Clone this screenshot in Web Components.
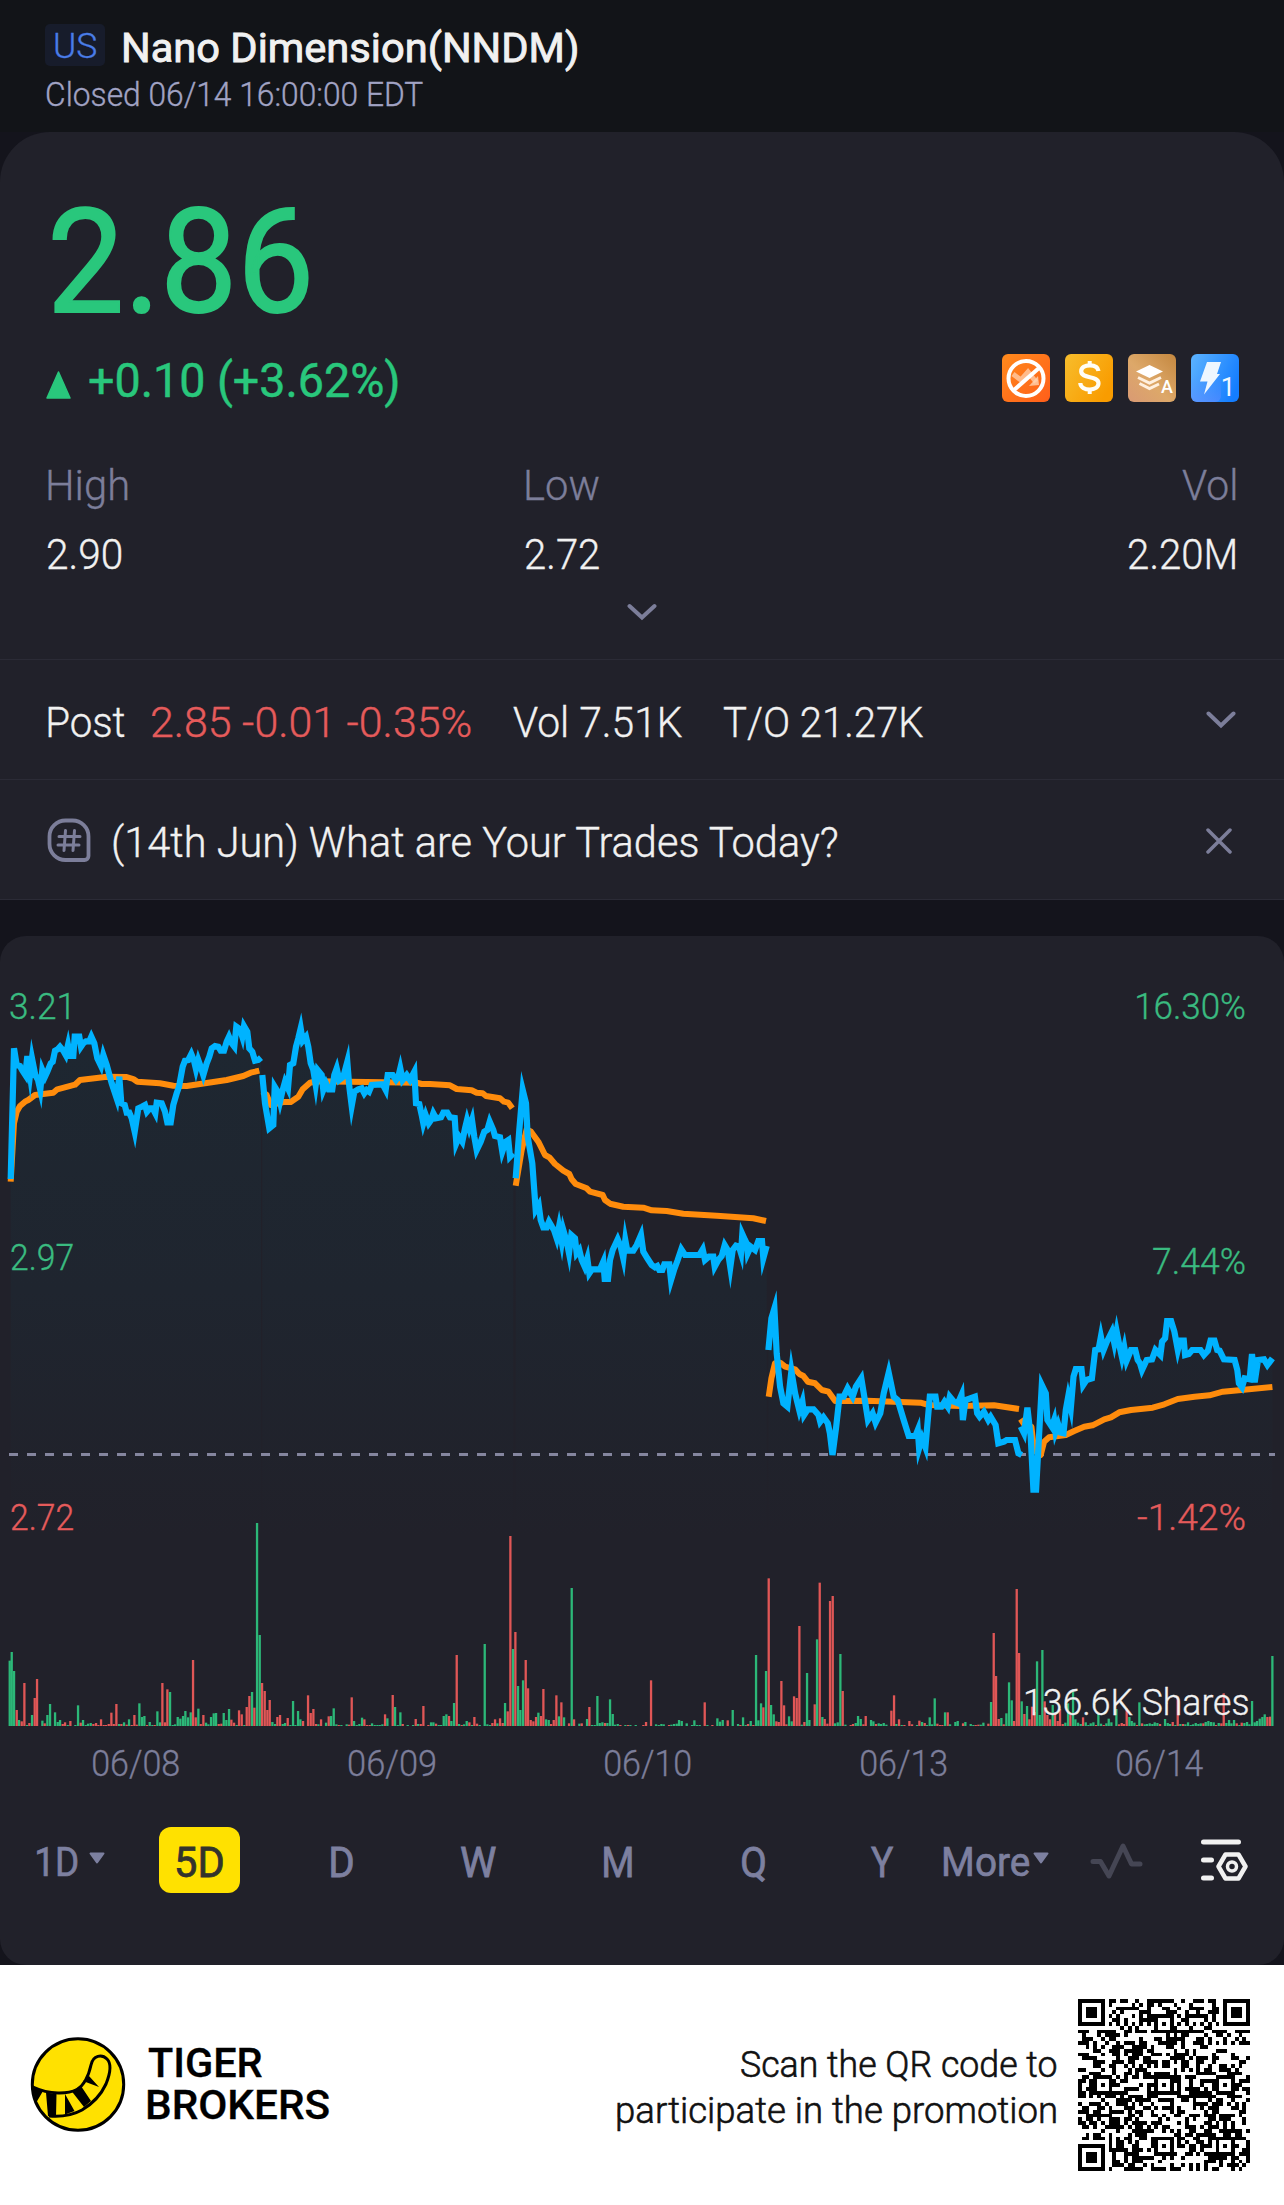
<!DOCTYPE html>
<html lang="en">
<head>
<meta charset="utf-8">
<title>Nano Dimension (NNDM)</title>
<style>
html,body{margin:0;padding:0}
body{width:1284px;background:#14141c;font-family:Roboto,"Liberation Sans",sans-serif}
</style>
</head>
<body>
<stock-page></stock-page>
<script>
const define=(name,html,setup)=>customElements.define(name,class extends HTMLElement{
  connectedCallback(){
    if(this.shadowRoot)return;
    const t=document.createElement('template');t.innerHTML=html;
    this.attachShadow({mode:'open'}).append(t.content.cloneNode(true));
    if(setup)setup.call(this,this.shadowRoot);
  }
});

/* A line of text whose box is its ink: cap height by requested width. */
const pen=document.createElement('canvas').getContext('2d');
define('fit-text',`<style>
:host{display:block;flex:none;white-space:nowrap}
span{display:block;width:max-content;transform-origin:0 50%}
</style><span><slot></slot></span>`,function(root){
  const cap=+this.getAttribute('cap'),w=+this.getAttribute('w'),wt=this.getAttribute('weight')||300;
  const size=cap/0.711,s=root.querySelector('span'),edge=this.getAttribute('edge')||(wt==300?.35:0);
  pen.font=`${wt} ${size}px Roboto, "Liberation Sans", sans-serif`;
  const m=pen.measureText(this.textContent);
  const k=w/(m.actualBoundingBoxRight+m.actualBoundingBoxLeft);
  this.style.cssText+=`;width:${w}px;height:${cap}px`;
  s.style.cssText=`font-size:${size}px;font-weight:${wt};line-height:${cap}px;-webkit-text-stroke:${edge}px currentColor;transform:translate(${m.actualBoundingBoxLeft*k}px,.0137em) scaleX(${k})`;
});

define('page-header',`<style>
:host{display:block;height:132px;background:#121418;box-sizing:border-box;padding:24px 45px 0}
.row{display:flex;align-items:center;gap:19px;height:42px}
.badge{width:60px;height:42px;border-radius:5px;background:#171c2b;color:#4a7de8;display:flex;align-items:center;justify-content:center}
.badge fit-text{margin-top:3px}
.name{color:#f1f1f1;margin-top:5px}
.time{color:#a1a3c4;margin:18px 0 0 2px}
</style>
<div class="row"><div class="badge"><fit-text w="41" cap="25.5">US</fit-text></div>
<fit-text class="name" w="453" cap="29.5" weight="400" edge=".9">Nano Dimension(NNDM)</fit-text></div>
<fit-text class="time" w="376" cap="23">Closed 06/14 16:00:00 EDT</fit-text>`);

define('quote-badges',`<style>:host{display:flex;gap:15px}svg{display:block}</style>
<svg width="48" height="48"><defs><linearGradient id="a" x1="0" y1="0" x2="1" y2="1"><stop offset="0" stop-color="#ff8a1c"/><stop offset="1" stop-color="#ff5e1a"/></linearGradient></defs>
<rect width="48" height="48" rx="6" fill="url(#a)"/><path d="M11 20l8 6 7-8 8 10" fill="none" stroke="#ffd2b0" stroke-width="5" opacity=".75"/><path d="M27 32l10-1-1-9z" fill="#ffd2b0" opacity=".8"/>
<circle cx="24" cy="24.500" r="17.500" fill="none" stroke="#fff" stroke-width="4"/><path d="M12 36L37 14" stroke="#fff" stroke-width="4"/></svg>
<svg width="48" height="48"><defs><linearGradient id="b" x1="0" y1="0" x2="1" y2=".6"><stop offset="0" stop-color="#f7bd2c"/><stop offset="1" stop-color="#f99c00"/></linearGradient></defs>
<rect width="48" height="48" rx="6" fill="url(#b)"/><path d="M33.500 17.500C33 13.500 29.500 11.800 25 11.800c-5 0-8.800 2.200-8.800 6 0 8 17.300 4 17.300 12 0 3.800-3.800 6.200-8.600 6.200-5.200 0-9.400-2.200-9.600-6.500" transform="translate(0 -.5)" fill="none" stroke="#fffdf5" stroke-width="4.200"/><path d="M24.700 7v4M24.700 35.500v4.500" stroke="#fffdf5" stroke-width="4"/></svg>
<svg width="48" height="48"><defs><linearGradient id="c" x1="0" y1="1" x2="1" y2="0"><stop offset="0" stop-color="#d99a74"/><stop offset=".45" stop-color="#dda869"/><stop offset="1" stop-color="#c4873f"/></linearGradient></defs>
<rect width="48" height="48" rx="6" fill="url(#c)"/><path d="M8 17.500l13.500-6.500L35 17.500 21.500 24z" fill="#fff"/><path d="M10 23.500l11.500 5.500 11.500-5.500M11.500 29.500l10 5 9.500-4.500" fill="none" stroke="#fff0df" stroke-width="3"/>
<text x="39" y="39" text-anchor="middle" font-family="Roboto" font-weight="500" font-size="18" fill="#fff">A</text></svg>
<svg width="48" height="48"><defs><linearGradient id="d" x1="0" y1=".2" x2="1" y2=".6"><stop offset="0" stop-color="#58b0ff"/><stop offset="1" stop-color="#147dff"/></linearGradient><linearGradient id="e" x1="0" y1="0" x2="0" y2="1"><stop offset=".4" stop-color="#5a8cff" stop-opacity="0"/><stop offset="1" stop-color="#6f8cff" stop-opacity=".5"/></linearGradient></defs>
<rect width="48" height="48" rx="6" fill="url(#d)"/><rect width="30" height="48" rx="6" fill="url(#e)"/><path d="M16 8h14l-4 12h3L13 40.500l3.500-13H9z" fill="#eef7ff"/>
<text x="37" y="42" text-anchor="middle" font-family="Roboto" font-weight="400" font-size="26" fill="#eef7ff">1</text></svg>`);

define('quote-card',`<style>
:host{display:block;background:#21212a;border-radius:50px 50px 0 0;overflow:hidden;height:768px;box-sizing:border-box}
.main{height:527px;padding:77px 45px 0;box-sizing:border-box}
.price{color:#29c77c;margin-left:8px}
.change{display:flex;height:48px;margin-top:42px;color:#29c77c;justify-content:space-between}
.delta{display:flex;gap:18px;padding:9px 0 0 1px}
.delta svg{margin-top:8px}
.stats{display:grid;grid-template-columns:478px 1fr auto;padding:0 4px 0 3px;margin-top:68px}
.stat{display:flex;flex-direction:column;gap:39px;color:#f1f1f1}
.stat>:first-child{color:#7c7e9a}
.stat.end{align-items:flex-end}
.more{display:block;margin:34px auto 0}
.line{height:120px;border-top:1px solid #2b2b36;box-sizing:border-box;padding:47px 45px 0 48px;display:flex;color:#f1f1f1}
.last{border-bottom:1px solid #2b2b36;height:121px;padding-left:47px}
svg{flex:none}
</style>
<section class="main">
<fit-text class="price" w="255" cap="103" weight="400" edge="2">2.86</fit-text>
<div class="change"><div class="delta"><svg width="25" height="28"><path d="M12.500 1L24 27H1z" fill="#29c77c" stroke="#29c77c" stroke-width="1.500" stroke-linejoin="round"/></svg>
<fit-text w="309" cap="34" weight="400" edge=".5">+0.10 (+3.62%)</fit-text></div><quote-badges></quote-badges></div>
<div class="stats">
<div class="stat"><fit-text w="80" cap="30">High</fit-text><fit-text w="73" cap="30">2.90</fit-text></div>
<div class="stat"><fit-text w="73" cap="30">Low</fit-text><fit-text w="73" cap="30">2.72</fit-text></div>
<div class="stat end"><fit-text w="53" cap="30">Vol</fit-text><fit-text w="106" cap="30">2.20M</fit-text></div>
</div>
<svg class="more" width="30" height="18"><path d="M2.500 3L15 14.500 27.500 3" fill="none" stroke="#7c7e9a" stroke-width="4" stroke-linecap="round"/></svg>
</section>
<section class="line"><fit-text w="77" cap="30">Post</fit-text><fit-text style="color:#e55b5b;margin-left:27px" w="319" cap="30">2.85 -0.01 -0.35%</fit-text>
<fit-text style="margin-left:42px" w="169" cap="30">Vol 7.51K</fit-text><fit-text style="margin-left:42px" w="199" cap="30">T/O 21.27K</fit-text>
<svg style="margin:4px 3px 0 auto" width="30" height="18"><path d="M2.500 2.500L15 14.500 27.500 2.500" fill="none" stroke="#7c7e9a" stroke-width="4" stroke-linecap="round"/></svg></section>
<section class="line last">
<svg style="margin-top:-9px" width="44" height="45"><path d="M18.500 2.500h7a16 16 0 0 1 16 16V38a4 4 0 0 1-4 4H18.500a16 16 0 0 1-16-16v-7.500a16 16 0 0 1 16-16z" fill="none" stroke="#7c7e9a" stroke-width="3.800"/><path d="M18.500 12.500l-1.500 20M27.500 12.500l-1.500 20M12 18.500h21M11 27h21" stroke="#7c7e9a" stroke-width="3" stroke-linecap="round"/></svg>
<fit-text style="margin-left:22px" w="726" cap="30">(14th Jun) What are Your Trades Today?</fit-text>
<svg style="margin:1px 7px 0 auto" width="26" height="26"><path d="M2 2l22 22M24 2L2 24" stroke="#7c7e9a" stroke-width="3.500" stroke-linecap="round"/></svg></section>`);

/* Price, average and volume series: [originX, originY, scaleX, scaleY, points]. */
const A=[0,980,3,3],B=[430,1040,3,3],C=[760,1220,2.992,3];
const price=[
 [[A,'32,597 42,205 50,255 60,258 66,270 76,285 82,228 90,285 96,235 106,285 114,300 121,330 127,270 135,290 142,275 152,250 158,245 165,212 173,208 180,200 190,212 197,225 204,195 210,228 220,228 224,170 238,170 243,200 250,190 258,184 268,184 274,170 283,190 292,235 303,258 310,225 320,255 335,310 350,355 358,290 364,370 374,375 380,398 388,398 395,415 404,455 415,385 425,380 435,375 441,395 450,385 458,385 466,400 470,368 485,370 495,395 502,427 512,427 520,375 530,340 537,320 548,260 555,242 565,240 574,222 582,242 588,268 595,240 602,260 610,285 620,250 628,230 635,205 645,198 655,200 662,212 672,212 680,185 687,170 695,190 703,200 709,140 720,148 727,170 732,138 742,155 748,205 757,215 765,242 775,240 783,233']],
 [[A,'787,285 795,370 808,445 820,435 824,320 833,335 840,365 848,330 855,305 864,325 870,255 880,250 888,200 895,175 902,145 908,182 918,170 925,200 932,250 940,270 947,315 953,270 965,285 970,330 978,310 986,328 997,328 1003,285 1010,265 1018,300 1030,290 1042,245 1048,320 1055,378 1063,335 1075,328 1085,325 1093,340 1100,330 1107,335 1115,315 1148,313 1157,330 1163,285 1178,285 1188,300 1195,290 1201,265 1208,300 1220,285 1230,300 1243,275 1248,370 1258,372 1265,405 1270,430 1277,405 1286,430'],[B,'3,240 10,220 18,235 33,232 40,218 52,218 60,232 74,234 79,310 87,290 97,305 105,265 111,240 118,265 126,240 133,290 140,330 152,305 163,275 172,270 179,245 190,270 195,288 210,292 217,335 227,305 235,300 240,350 250,340']],
 [[B,'257,415 268,270 278,150 288,190 293,290 300,330 307,370 317,510 326,495 332,540 340,562 350,562 357,545 367,562 372,570 380,595 387,560 395,605 400,570 410,605 417,640 424,585 435,595 440,640 448,630 455,660 464,680 472,655 478,700 486,688 510,688 520,665 524,717 534,717 540,660 548,630 563,598 572,620 580,655 586,600 592,632 610,632 620,615 633,585 640,635 652,655 665,675 675,682 682,678 688,690 697,690 703,673 718,673 723,720 732,690 743,660 754,628 765,645 808,645 818,628 825,660 837,650 850,650 854,680 865,660 875,648 884,615 893,630 901,682 908,630 918,617 927,620 933,640 937,582 945,600 950,610 953,640 962,620 975,630 985,603 996,603 1000,655 1010,618']],
 [[C,'25,390 34,295 43,265 50,400 60,500 70,550 82,560 94,453 105,520 118,572 127,545 132,585 143,568 160,568 175,585 180,605 190,592 203,610 209,640 217,705 228,620 238,530 250,530 262,505 277,530 287,500 303,475 312,530 323,600 337,580 346,608 360,580 370,520 385,458 400,530 412,540 430,600 445,648 465,648 472,630 476,685 485,655 495,682 508,530 525,530 530,560 543,560 552,545 562,560 568,530 580,545 592,550 603,525 607,600 615,540 643,530 650,580 657,590 670,575 683,600 690,590 705,615 713,670 730,665 738,660 763,660 773,700 783,705']],
 [[C,'780,620 790,640 800,563 810,650 818,809 826,809 843,495 855,520 860,600 873,620 880,600 884,635 892,612 900,638 908,640 915,570 922,530 930,565 938,470 945,447 962,447 967,495 977,480 993,475 1003,390 1013,388 1020,350 1028,390 1038,365 1053,335 1060,370 1067,333 1075,375 1083,412 1090,382 1097,422 1110,390 1123,390 1130,420 1137,430 1143,450 1157,420 1173,418 1183,390 1198,405 1203,365 1212,355 1218,303 1230,303 1240,335 1250,390 1257,362 1268,362 1272,405 1283,402 1293,390 1318,390 1328,405 1340,392 1348,362 1360,362 1368,390 1375,392 1388,418 1420,420 1428,450 1433,490 1442,502 1450,475 1465,478 1472,402 1480,487 1490,420 1508,418 1518,435 1533,415']]];
const average=[
 [[A,'32,605 42,430 50,395 60,378 75,365 85,360 105,345 160,338 172,328 225,314 240,300 290,294 320,290 380,291 400,297 412,305 480,310 520,317 560,318 620,309 680,300 730,288 752,278 778,272']],
 [[A,'787,335 800,345 812,375 850,366 872,366 895,350 908,328 930,308 950,304 1100,306 1250,308 1265,312 1290,312'],[B,'0,132 60,136 80,147 125,151 140,158 158,160 168,168 210,175 222,185 235,188 247,205']],
 [[B,'257,437 275,330 290,268 303,275 325,305 345,345 358,352 375,372 400,392 418,402 425,418 437,432 470,445 480,455 518,465 525,480 540,491 580,500 640,503 665,511 710,513 760,521 860,527 970,535 1008,543']],
 [[C,'26,530 34,475 45,430 60,428 75,440 105,448 118,462 130,468 143,485 165,490 185,510 205,515 225,543 320,542 400,545 480,548 505,555 600,558 700,556 775,567']],
 [[C,'780,597 792,615 812,620 820,690 840,705 850,665 865,652 915,645 940,633 970,620 995,616 1030,598 1050,592 1075,577 1110,570 1175,563 1210,553 1250,537 1300,530 1345,526 1385,515 1440,510 1533,501']]];
const volume=[
[0,'29,482g;35,456g;42,513g;50,630r;57,660g;65,664r;73,549r;81,675g;88,669r;96,645g;104,594r;111,537r;127,662g;134,670r;142,645g;150,612g;165,637g;173,666g;180,660g;188,672r;195,667r;203,675g;211,663r;226,675g;234,616g;242,668r;249,660g;257,675g;264,671g;272,669g;280,672r;288,669r;295,675r;303,658r;311,675r;318,675r;326,672r;334,638r;341,672r;349,612r;357,672g;364,672r;372,667g;380,674r;387,658g;395,675r;403,645r;410,674r;418,610g;426,651g;433,648g;441,675r;449,666g;457,675g;464,675r;472,634g;480,667g;487,549r;495,667r;502,568r;510,576g;518,676g;525,673g;533,651g;541,656g;549,648g;556,633g;564,652g;572,637g;579,480r;587,652r;595,626g;602,672r;610,645r;618,668g;625,673g;633,651g;641,640g;648,639g;656,672r;664,671r;671,639g;679,660g;687,627g;694,659r;702,668r;710,675g;717,631r;725,643r;733,675g;740,621r;748,588r;756,576g;763,623r;771,69g;779,405g;786,549r;794,573r;802,630r;809,600r;817,666g;825,672g;832,651r;840,645r;848,672g;855,669g;863,654r;871,675g;879,603g;886,675g;894,633g;901,658g;909,663r;924,586r;932,639r;940,627r;948,672r;955,673g;963,658r;978,668g;986,649r;993,648g;1001,625g;1009,673g;1016,675r;1024,676g;1040,673g;1047,674r;1055,592r;1062,663g;1070,676g;1078,672g;1086,653g;1093,658r;1101,675r;1109,675r;1116,670g;1124,675g;1132,676g;1139,676g;1147,673g;1155,643r;1162,655g;1178,585r;1185,621g;1193,676g;1201,637g;1208,672r;1223,676g;1239,675g;1247,657r;1254,672g;1262,672r;1270,618r;1285,676r'],
[430,'3,667g;10,667g;18,671r;26,675g;33,675g;41,648g;49,643g;57,648r;64,663g;72,609g;80,465r;87,672g;95,675r;102,673g;110,663g;118,667r;126,675g;133,651r;141,671r;149,675g;164,432g;172,673g;180,675g;187,669r;195,658r;202,670g;210,655r;218,669r;225,609g;233,634r;241,108r;249,447g;256,396r;264,558g;271,630g;279,541g;287,480r;294,565r;302,660r;310,664r;318,651r;325,638g;333,648r;340,567r;348,658g;356,660g;363,672r;371,660r;379,586r;387,649g;394,607r;402,652g;417,670r;425,264g;432,658r;448,671g;455,670r;471,657g;478,621r;486,675g;494,676g;502,588g;509,669g;517,667g;525,669r;532,669g;540,598g;548,642g;555,674g;563,672g;571,675r;586,676g;594,675r;601,676g;617,675g;640,675r;648,666r;663,541r;678,673g;686,675g;694,672g;701,673g;717,675r;724,674g;732,672g;740,671g;747,660g;755,663g;770,670g;786,675g;793,661g;801,676g;809,675g;824,607r;832,675g;847,675r;862,655g;870,665g;878,660g;893,661r;908,630g;924,672g;931,675r;939,652g;947,676g;954,672r;962,663g;970,675r;978,465g;985,661g;993,610g;1000,622r;1008,513g;1016,235r;1023,615g;1031,643g;1039,664r;1046,666r;1054,543r;1062,616r;1069,673r;1077,649g;1085,664g;1092,589r;1100,594r;1108,378r;1115,674g;1123,666r;1131,519g;1138,660g;1154,613r;1161,418g;1169,248r;1177,651g;1184,657r;1192,671r;1200,303r;1208,288r;1215,670g;1223,667g;1231,462g;1238,573r;1246,674g;1262,675r;1269,672r;1277,669g;1284,648g'],
[860,'2,657g;10,673r;17,648r;33,660g;40,664g;48,672r;56,670g;63,672g;71,669g;79,674g;94,632r;102,586r;109,672g;117,658r;125,675g;133,676r;148,663r;156,673r;171,675g;178,662r;186,666g;194,669r;201,675g;209,652g;216,673g;224,595g;232,671r;240,675r;247,676r;255,637g;263,637r;270,673g;286,666g;293,663g;309,670r;316,666g;332,672g;340,675g;347,675r;355,674r;362,674g;370,668g;385,671r;393,606g;401,399r;408,528r;416,657r;424,654g;431,673r;439,640g;447,547g;455,601g;462,663r;470,267r;477,459r;485,604g;493,642r;501,618g;508,658r;516,620r;524,636r;531,484g;539,645g;547,450g;554,604r;562,645r;570,658r;578,615g;585,640r;593,663r;600,627r;608,672r;616,668g;624,610g;631,645r;639,574g;646,658g;654,668g;662,672g;669,652r;677,667g;685,675g;692,670g;700,667g;708,675r;715,640g;723,671g;731,675r;739,670g;746,656g;754,667g;769,627g;777,673r;785,669r;792,672r;800,625r;808,651g;815,663g;823,668g;831,675r;838,607g;846,670r;854,673g;861,672g;869,670g;877,672g;884,667g;892,669g;900,672r;915,657g;923,669g;930,672g;938,666r;946,675g;953,590r;961,672g;969,672r;976,673g;984,667g;992,675g;999,673g;1007,669g;1015,672g;1022,670g;1030,670r;1037,666g;1045,663g;1053,666g;1061,667g;1068,675r;1076,669g;1084,670r;1091,580r;1099,669g;1107,660g;1114,670g;1122,660g;1130,670r;1138,675g;1145,668r;1153,669g;1161,666g;1168,673g;1176,603g;1184,667g;1191,663g;1199,656g;1207,651g;1214,643g;1222,651r;1230,650r;1237,468g']];
const points=day=>day.flatMap(([[ox,oy,sx,sy],s])=>s.split(' ').map(p=>{const[x,y]=p.split(',');return[(ox+x/sx).toFixed(1),(oy+y/sy-936).toFixed(1)]}));

define('price-chart',`<style>
:host{display:block;position:relative;height:791px}
svg{display:block}
.o{position:absolute}
.g{color:#3abb80}.r{color:#e55b5b}.w{color:#f1f1f1}
</style>
<svg width="1284" height="791"><defs><linearGradient id="f" gradientUnits="userSpaceOnUse" x1="0" y1="110" x2="0" y2="600"><stop offset="0" stop-color="#1e2731"/><stop offset=".5" stop-color="#1f252f"/><stop offset="1" stop-color="#21212a"/></linearGradient></defs>
<g id="area" fill="url(#f)"></g><path d="M9 518.500H1275" stroke="#85869f" stroke-width="3" stroke-dasharray="9 9"/>
<g id="avg" fill="none" stroke="#ff8c0c" stroke-width="6" stroke-linejoin="round"></g><g id="price" fill="none" stroke="#00b3ff" stroke-width="6.200" stroke-miterlimit="8"></g><g id="vol"></g></svg>
<fit-text class="o g" style="left:10px;top:57px" w="59" cap="26">3.21</fit-text>
<fit-text class="o g" style="left:11px;top:308px" w="62" cap="26">2.97</fit-text>
<fit-text class="o r" style="left:11px;top:568px" w="62" cap="26">2.72</fit-text>
<fit-text class="o g" style="left:1137px;top:57px" w="108px" cap="26">16.30%</fit-text>
<fit-text class="o g" style="left:1153px;top:312px" w="92" cap="26">7.44%</fit-text>
<fit-text class="o r" style="left:1137px;top:568px" w="108" cap="26">-1.42%</fit-text>
<fit-text class="o w" style="left:1026px;top:753px" w="222" cap="26">136.6K Shares</fit-text>`.replace('108px','108'),function(root){
  const $=id=>root.getElementById(id);
  $('avg').innerHTML=average.map(d=>`<polyline points="${points(d).join(' ')}"/>`).join('');
  $('price').innerHTML=price.map(d=>`<polyline points="${points(d).join(' ')}"/>`).join('');
  $('area').innerHTML=price.map(d=>{const p=points(d);return`<polygon points="${p[0][0]},600 ${p.join(' ')} ${p[p.length-1][0]},600"/>`}).join('');
  $('vol').innerHTML=volume.map(([ox,s])=>s.split(';').map(b=>{
    const m=b.match(/(\d+),(\d+)(\w)/),h=Math.max(1,(678-m[2])/3);
    return`<rect x="${(ox+m[1]/3-1.1).toFixed(2)}" y="${(790-h).toFixed(2)}" width="2.300" height="${h.toFixed(2)}" fill="${m[3]=='g'?'#2cb878':'#e05656'}"/>`}).join('')).join('');
});

define('range-tabs',`<style>
:host{display:flex;align-items:center;height:66px;color:#7d80a0;padding-left:37px}
fit-text{margin-top:4px}
.on{width:81px;height:66px;border-radius:12px;background:#ffe100;color:#33332c;display:flex;align-items:center;justify-content:center;flex:none}
svg{flex:none}
</style>
<fit-text w="40" cap="28.500" weight="400" edge=".7">1D</fit-text>
<svg style="margin:-4px 0 0 12px" width="16" height="12"><path d="M1.500 1.500h13L8 10.500z" fill="#7d80a0" stroke="#7d80a0" stroke-width="2" stroke-linejoin="round"/></svg>
<div class="on" style="margin-left:54px"><fit-text w="46" cap="30" weight="400" edge=".8">5D</fit-text></div>
<fit-text style="margin-left:91px" w="22" cap="30" weight="400" edge=".8">D</fit-text>
<fit-text style="margin-left:108px" w="35" cap="30" weight="400" edge=".8">W</fit-text>
<fit-text style="margin-left:108px" w="28" cap="30" weight="400" edge=".8">M</fit-text>
<fit-text style="margin-left:110px" w="23" cap="30" weight="400" edge=".8">Q</fit-text>
<fit-text style="margin-left:106px" w="22" cap="30" weight="400" edge=".8">Y</fit-text>
<fit-text style="margin-left:51px" w="85" cap="28.500" weight="400" edge=".7">More</fit-text>
<svg style="margin:-4px 0 0 4px" width="16" height="12"><path d="M1.500 1.500h13L8 10.500z" fill="#7d80a0" stroke="#7d80a0" stroke-width="2" stroke-linejoin="round"/></svg>
<svg style="margin:2px 0 0 41px" width="54" height="36"><path d="M3 18.500h7.500L19 33 33 3l8.500 18H50" fill="none" stroke="#454654" stroke-width="5" stroke-linecap="round" stroke-linejoin="round"/></svg>
<svg style="margin:0 0 0 57px" width="47" height="43"><path d="M2.500 3h35M2.500 21h8M2.500 39h8" stroke="#f1f1f1" stroke-width="5" stroke-linecap="round"/><path d="M24.500 15.500h13l7 12-7 12h-13l-7-12z" fill="none" stroke="#f1f1f1" stroke-width="4.500" stroke-linejoin="round"/><circle cx="31" cy="27.500" r="4.500" fill="none" stroke="#f1f1f1" stroke-width="3.500"/></svg>`);

define('chart-card',`<style>
:host{display:block;background:#21212a;border-radius:26px;height:1029px;margin-top:36px;box-sizing:border-box}
.dates{display:flex;padding:23px 0 0 93px;gap:170px;color:#7c7e9a;height:100px;box-sizing:border-box}
</style><price-chart></price-chart>
<div class="dates"><fit-text w="86" cap="26">06/08</fit-text><fit-text w="86" cap="26">06/09</fit-text><fit-text w="86" cap="26">06/10</fit-text><fit-text w="86" cap="26">06/13</fit-text><fit-text w="86" cap="26">06/14</fit-text></div>
<range-tabs></range-tabs>`);

define('qr-code',`<style>:host,svg{display:block}</style><svg width="172" height="172" viewBox="0 0 45 45" shape-rendering="crispEdges"><path fill="#000"/></svg>`,function(root){
  let seed=20220614,d='';
  const rnd=()=>{seed^=seed<<13;seed^=seed>>>17;seed^=seed<<5;return(seed>>>9)%100<52};
  const ring=(x,y,cx,cy)=>Math.max(Math.abs(x-cx),Math.abs(y-cy));
  for(let y=0;y<45;y++)for(let x=0;x<45;x++){
    let on=rnd();
    if(x==6||y==6)on=(x+y)%2==0;
    for(const cx of[6,22,38])for(const cy of[6,22,38]){const r=ring(x,y,cx,cy);if(r<3&&!(cx==6&&cy!=22)&&!(cy==6&&cx!=22))on=r!=1}
    for(const[cx,cy]of[[3,3],[41,3],[3,41]]){const r=ring(x,y,cx,cy);if(r<5)on=r!=2&&r!=4}
    if(on)d+=`M${x} ${y}h1v1h-1z`;
  }
  root.querySelector('path').setAttribute('d',d);
});

define('brand-footer',`<style>
:host{display:flex;height:240px;background:#fff;color:#000;box-sizing:border-box;padding:34px 34px 0 30px}
.name{display:flex;flex-direction:column;gap:13px;margin:49px 0 0 22px}
.scan{display:flex;flex-direction:column;align-items:flex-end;gap:20px;margin:52px 22px 0 auto;color:#111}
.logo{margin-top:37px}
</style>
<svg class="logo" width="96" height="97"><circle cx="48" cy="48.500" r="45.700" fill="#ffe100" stroke="#000" stroke-width="3"/>
<path d="M3 51C20 59 38 58 47 53.500C56 48 59 38 61 29C63 19 72 18 77 23C82 28 80 38 76 48C70 61 62 68 52 74C43 79 31 81 19 80" fill="none" stroke="#000" stroke-width="3"/>
<path d="M2.500 50L13 55 6 67zM16 56.500L26.500 58 26 81 18 80zM35 58l9.500 17-9.500 3.500zM41.500 55L51 50 61 65 54 71zM53 45l6-5 10 11z"/></svg>
<div class="name"><fit-text w="114" cap="29" weight="500" edge=".3">TIGER</fit-text><fit-text w="181" cap="29.500" weight="500" edge=".3">BROKERS</fit-text></div>
<div class="scan"><fit-text w="315" cap="26" edge=".6">Scan the QR code to</fit-text><fit-text w="439" cap="26" edge=".6">participate in the promotion</fit-text></div>
<qr-code></qr-code>`);

define('stock-page',`<style>:host{display:block;width:1284px;height:2205px;overflow:hidden}</style>
<page-header></page-header><quote-card></quote-card><chart-card></chart-card><brand-footer></brand-footer>`);
</script>
</body>
</html>
